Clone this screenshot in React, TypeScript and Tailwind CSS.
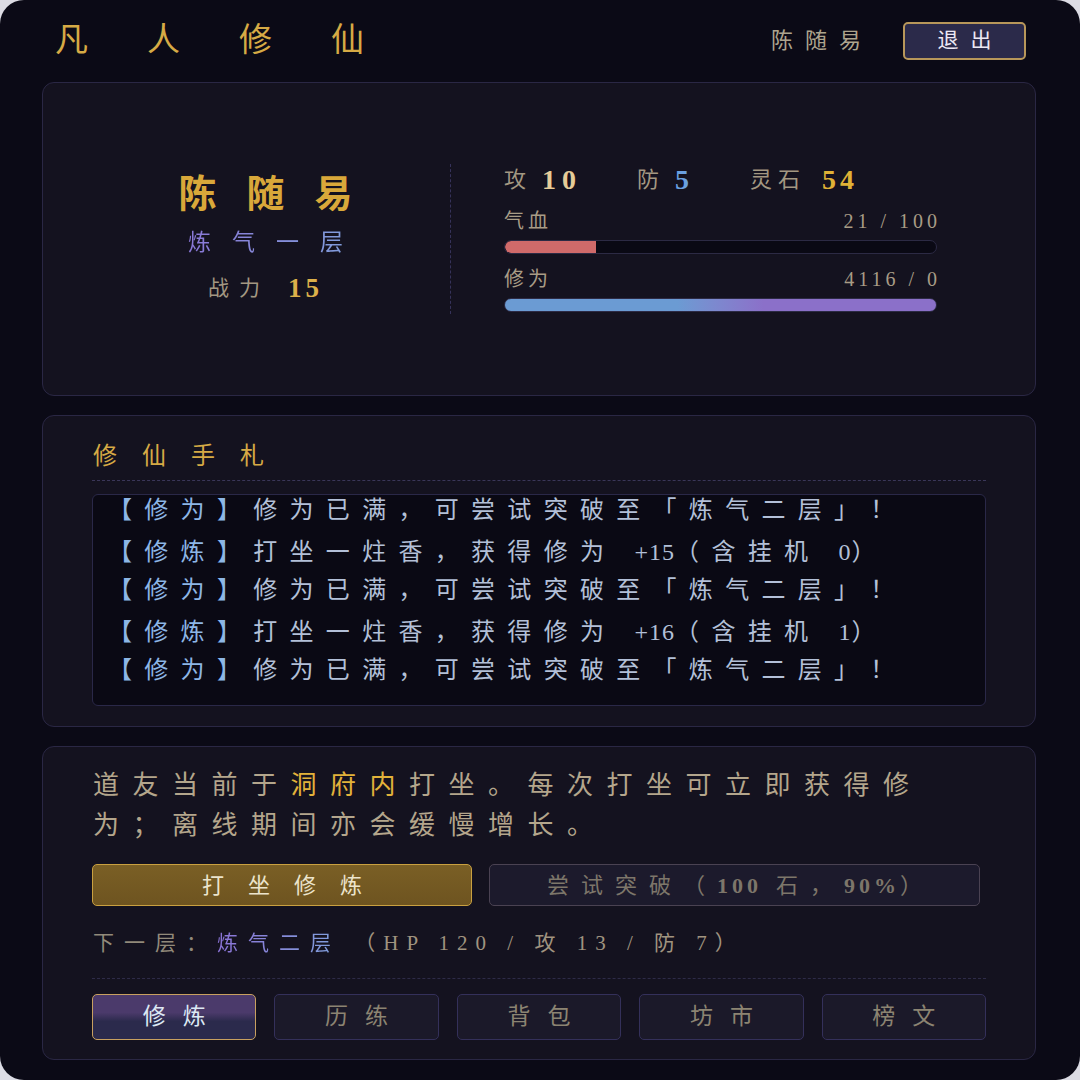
import React from "react";

const F = "font-['Liberation_Serif','Noto_Sans_CJK_SC',serif]";

function LogLine({ tag, children, mt }: { tag: string; children: React.ReactNode; mt: string }) {
  return (
    <div className={`${mt} leading-[30px] text-[24px] tracking-[12.3px] text-[#b3c0d8] whitespace-nowrap`}>
      <span className="text-[#8db6e6]">【{tag}】</span>
      {children}
    </div>
  );
}

export default function App() {
  return (
    <div className={`w-[1080px] h-[1080px] bg-[#dcdce4] ${F}`}>
      <div className="w-full h-full rounded-[24px] bg-[#0b0a16] pl-[42px] pr-[44px] pb-[20px] flex flex-col">
        {/* Header */}
        <div className="h-[82px] flex items-center justify-between px-[13px] pr-[10px]">
          <div className="text-[33px] tracking-[59px] leading-[40px] text-[#d6aa45] -mt-[2px]">凡人修仙</div>
          <div className="flex items-center gap-[30px]">
            <div className="text-[22px] tracking-[12px] text-[#ada48e] leading-[28px]">陈随易</div>
            <div className="w-[123px] h-[38px] flex items-center justify-center rounded-[5px] border-2 border-[#b8975a] bg-[#2b2a4a] text-[21px] tracking-[12px] pl-[12px] text-[#ece8f4]">
              退出
            </div>
          </div>
        </div>

        {/* Card 1 */}
        <div className="h-[315px] rounded-[12px] border border-[#2a2744] bg-[#14121f] px-[50px] flex items-center">
          <div className="w-[357px] pr-[12px] flex flex-col items-center">
            <div className="text-[38px] font-bold tracking-[30px] pl-[30px] leading-[40px] text-[#d9a83a]">陈随易</div>
            <div className="mt-[15px] text-[23px] tracking-[21px] pl-[21px] leading-[28px] bg-gradient-to-r from-[#8a72d6] to-[#7fa0dc] bg-clip-text text-transparent">
              炼气一层
            </div>
            <div className="mt-[16px] flex items-center gap-[18px] leading-[30px]">
              <span className="text-[21px] tracking-[10px] text-[#a39882]">战力</span>
              <span className="text-[27px] font-bold tracking-[4px] text-[#dcb04a]">15</span>
            </div>
          </div>
          <div className="h-[150px] border-l border-dashed border-[#36325a]" />
          <div className="pl-[53px] w-[486px] flex flex-col">
            <div className="flex items-center gap-[55px] leading-[30px]">
              <div className="flex items-center gap-[16px]">
                <span className="text-[22px] text-[#a39882]">攻</span>
                <span className="text-[28px] font-bold tracking-[6px] text-[#e6cc98]">10</span>
              </div>
              <div className="flex items-center gap-[16px]">
                <span className="text-[22px] text-[#a39882]">防</span>
                <span className="text-[28px] font-bold tracking-[6px] text-[#6aa0e0]">5</span>
              </div>
              <div className="flex items-center gap-[16px]">
                <span className="text-[22px] tracking-[6px] text-[#a39882]">灵石</span>
                <span className="text-[28px] font-bold tracking-[4px] text-[#e0b236]">54</span>
              </div>
            </div>
            <div className="mt-[14px] flex items-center justify-between leading-[24px] text-[20px] text-[#a89c86]">
              <span className="tracking-[4px]">气血</span>
              <span className="tracking-[4px] -mr-[4px]">21 / 100</span>
            </div>
            <div className="mt-[7px] h-[14px] rounded-full bg-[#0a0914] border border-[#2c2a44] overflow-hidden">
              <div className="h-full bg-[#d06a6a] rounded-l-full" style={{ width: "21%" }} />
            </div>
            <div className="mt-[13px] flex items-center justify-between leading-[24px] text-[20px] text-[#a89c86]">
              <span className="tracking-[4px]">修为</span>
              <span className="tracking-[4px] -mr-[4px]">4116 / 0</span>
            </div>
            <div className="mt-[7px] h-[14px] rounded-full border border-[#2c2a44] overflow-hidden bg-linear-to-r from-[#6b9bd3] from-40% to-[#8b70c9] to-60%" />
          </div>
        </div>

        {/* Card 2 */}
        <div className="mt-[19px] rounded-[12px] border border-[#2a2744] bg-[#14121f] px-[49px] pt-[29px] pb-[20px]">
          <div className="pl-[1px] pb-[13px] border-b border-dashed border-[#3a3658] text-[24px] leading-[22px] tracking-[25px] text-[#d6aa45]">
            修仙手札
          </div>
          <div className="mt-[13px] h-[212px] rounded-[6px] border border-[#2a2848] bg-[#0a0914] pl-[15px] overflow-hidden">
            <LogLine tag="修为" mt="mt-0">修为已满，可尝试突破至「炼气二层」！</LogLine>
            <LogLine tag="修炼" mt="mt-[12px]">
              打坐一炷香，获得修为 <span className="tracking-[1px]">+15</span>（含挂机 <span className="tracking-[1px]">0</span>）
            </LogLine>
            <LogLine tag="修为" mt="mt-[8px]">修为已满，可尝试突破至「炼气二层」！</LogLine>
            <LogLine tag="修炼" mt="mt-[12px]">
              打坐一炷香，获得修为 <span className="tracking-[1px]">+16</span>（含挂机 <span className="tracking-[1px]">1</span>）
            </LogLine>
            <LogLine tag="修为" mt="mt-[8px]">修为已满，可尝试突破至「炼气二层」！</LogLine>
          </div>
        </div>

        {/* Card 3 */}
        <div className="mt-[19px] rounded-[12px] border border-[#2a2744] bg-[#14121f] px-[49px] pt-[19px] pb-[19px]">
          <p className="w-[840px] pl-[1px] text-[26px] leading-[40px] tracking-[13.5px] text-[#b4a68c]">
            道友当前于<span className="text-[#e2b23a]">洞府内</span>打坐。每次打坐可立即获得修为；离线期间亦会缓慢增长。
          </p>
          <div className="mt-[18px] flex gap-[17px]">
            <div className="w-[380px] h-[42px] rounded-[5px] border border-[#c9a040] bg-linear-to-b from-[#7a5f25] to-[#6e5420] flex items-center justify-center text-[22px] tracking-[24px] pl-[24px] text-[#ece4cc]">
              打坐修炼
            </div>
            <div className="w-[491px] h-[42px] rounded-[5px] border border-[#4a4252] bg-[#1c1a2c] flex items-center justify-center text-[22px] tracking-[12px] pl-[12px] text-[#7d766a]">
              尝试突破（<span className="font-bold tracking-[4px]">100</span>
              <span className="ml-[14px]">石，</span>
              <span className="font-bold tracking-[4px]">90%</span>）
            </div>
          </div>
          <div className="mt-[22px] pl-[1px] pb-[20px] border-b border-dashed border-[#2e2b48] text-[21px] leading-[30px] tracking-[10px] whitespace-nowrap">
            <span className="text-[#928a7a]">下一层：</span>
            <span className="bg-gradient-to-r from-[#8a72d6] to-[#7fa0dc] bg-clip-text text-transparent">炼气二层</span>
            <span className="text-[#a09480] tracking-[8px]"> （HP 120 / 攻 13 / 防 7）</span>
          </div>
          <div className="mt-[15px] flex gap-[18px]">
            <div className="flex-1 h-[46px] rounded-[5px] border border-[#c8a060] bg-linear-to-b from-[#4b3a6b] from-40% to-[#2b2a4c] to-60% flex items-center justify-center text-[23px] tracking-[17px] pl-[17px] text-[#dce8f4]">
              修炼
            </div>
            {["历练", "背包", "坊市", "榜文"].map((t) => (
              <div
                key={t}
                className="flex-1 h-[46px] rounded-[5px] border border-[#34305a] bg-[#1b1929] flex items-center justify-center text-[23px] tracking-[17px] pl-[17px] text-[#8c8472]"
              >
                {t}
              </div>
            ))}
          </div>
        </div>
      </div>
    </div>
  );
}
